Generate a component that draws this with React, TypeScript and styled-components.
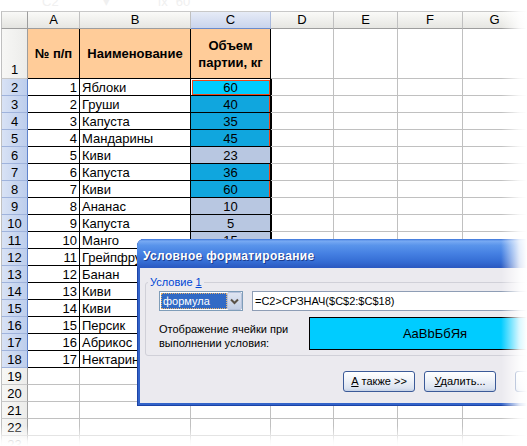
import React from 'react';
import styled, { createGlobalStyle, css } from 'styled-components';

const GlobalStyle = createGlobalStyle`
  html, body { margin: 0; padding: 0; background: #fff; }
  body { font-family: "Liberation Sans", Arial, sans-serif; overflow: hidden; }
  * { box-sizing: border-box; }
`;

const Page = styled.div`
  position: relative;
  width: 527px;
  height: 446px;
  overflow: hidden;
  background: #fff;
`;

const FormulaStrip = styled.div`
  height: 11px;
  display: flex;
  align-items: flex-start;
  overflow: hidden;
  font-size: 13px;
  line-height: 13px;
  color: #f0f0f0;
`;

const FormulaPart = styled.span<{ $left: number }>`
  margin-left: ${(p) => p.$left}px;
  margin-top: -5px;
`;

const Sheet = styled.div`
  margin-left: 1px;
  display: grid;
  grid-template-columns: 27px 52px 111px 80px 63px 64px 65px 64px;
  grid-template-rows: 18px 50px repeat(22, 17px);
`;

const Corner = styled.div`
  border-top: 1px solid #c8c8c8;
  border-left: 1px solid #c0c0c0;
  border-right: 1px solid #9d9d9d;
  border-bottom: 1px solid #9d9d9d;
  background: linear-gradient(#f9f9f7, #e4e4e0);
`;

const ColHeader = styled.div<{ $selected?: boolean }>`
  border-top: 1px solid #c8c8c8;
  border-right: 1px solid #c0c0c0;
  border-bottom: 1px solid #9d9d9d;
  background: linear-gradient(#fafaf8, #e6e6e2);
  font-size: 13px;
  line-height: 16px;
  display: flex;
  align-items: center;
  justify-content: center;
  color: #000;
  ${(p) =>
    p.$selected &&
    css`
      background: linear-gradient(#e6ebf7, #c9d4ec);
      border-bottom-color: #6b8bcb;
      border-right-color: #a9b9dc;
    `}
`;

const RowHeader = styled.div<{ $selected?: boolean; $tall?: boolean }>`
  border-left: 1px solid #c0c0c0;
  border-right: 1px solid #9d9d9d;
  border-bottom: 1px solid #c8c8c8;
  background: linear-gradient(to right, #f7f7f5, #ececea);
  font-size: 13px;
  line-height: 14px;
  display: flex;
  justify-content: center;
  align-items: ${(p) => (p.$tall ? 'flex-end' : 'flex-start')};
  padding-top: 2px;
  padding-bottom: ${(p) => (p.$tall ? '1px' : '0')};
  color: #000;
  ${(p) =>
    p.$selected &&
    css`
      background: linear-gradient(to right, #d8e2f5, #bccdec);
      border-right-color: #5f83cc;
      border-bottom-color: #9fb3dc;
    `}
`;

type Tone = 'none' | 'head' | 'active' | 'hit' | 'sel';

const toneStyles: Record<Tone, ReturnType<typeof css> | string> = {
  none: '',
  head: css`
    background: #ffcc99;
    font-weight: bold;
    text-align: center;
    line-height: 17px;
    align-items: center;
    white-space: normal;
    padding-top: 0;
  `,
  active: css`
    background: #00ccff;
    box-shadow: 1px 0 0 #000, inset 1px 1px 0 #fff, inset 2px 2px 0 #f04818,
      inset -1px -1px 0 #f04818;
  `,
  hit: css`
    background: #10a6de;
    box-shadow: 1px 0 0 #000, inset -1px 0 0 #f04818;
  `,
  sel: css`
    background: #b8c7e1;
    box-shadow: 1px 0 0 #000;
  `,
};

const Cell = styled.div<{ $boxed?: boolean; $align?: 'left' | 'right' | 'center'; $tone?: Tone }>`
  border-right: 1px solid ${(p) => (p.$boxed ? '#000' : '#c0c0c0')};
  border-bottom: 1px solid ${(p) => (p.$boxed ? '#000' : '#c0c0c0')};
  font-size: 13px;
  line-height: 14px;
  padding: 2px 2px 0;
  white-space: nowrap;
  overflow: hidden;
  display: flex;
  align-items: flex-start;
  justify-content: ${(p) =>
    p.$align === 'right' ? 'flex-end' : p.$align === 'center' ? 'center' : 'flex-start'};
  color: #000;
  ${(p) => toneStyles[p.$tone ?? 'none']}
`;

/* ---------- dialog ---------- */

const Dialog = styled.div`
  position: absolute;
  left: 137px;
  top: 239px;
  width: 541px;
  height: 167px;
  display: flex;
  flex-direction: column;
  padding: 0 3px 3px;
  border-radius: 7px 7px 0 0;
  background: #3263c9;
  box-shadow: inset 1px 0 0 #1c43a6, inset -1px 0 0 #1c43a6, inset 0 -1px 0 #1c43a6;
  font-family: "Liberation Sans", Arial, sans-serif;
  font-size: 11px;
  color: #000;
`;

const TitleBar = styled.div`
  height: 29px;
  margin: 0 -3px;
  padding: 4px 0 0 6px;
  border-radius: 7px 7px 0 0;
  background: linear-gradient(
    to bottom,
    #3a72d8 0%,
    #78aaf3 7%,
    #5994eb 22%,
    #4580e2 50%,
    #356dd4 78%,
    #2a58c0 100%
  );
  display: flex;
  align-items: center;
  color: #fff;
  font-weight: bold;
  font-size: 12px;
  letter-spacing: 0.35px;
  text-shadow: 1px 1px 0 #1b3d8f;
`;

const Body = styled.div`
  flex: 1;
  background: #ebeaef;
  padding: 7px 7px 0 5px;
  display: flex;
  flex-direction: column;
`;

const Group = styled.fieldset`
  margin: 0;
  min-width: 0;
  border: 1px solid #d0d0d8;
  border-radius: 3px;
  padding: 2px 8px 5px 2px;
`;

const GroupLegend = styled.legend`
  padding: 0 2px;
  margin-left: 0;
  color: #0046d5;
  font-size: 11px;
  line-height: 14px;
`;

const Underline = styled.span`
  text-decoration: underline;
`;

const GroupContent = styled.div`
  padding-left: 11px;
  display: flex;
  flex-direction: column;
  gap: 6px;
`;

const ConditionRow = styled.div`
  display: flex;
  gap: 9px;
  height: 20px;
`;

const Combo = styled.div`
  width: 84px;
  height: 20px;
  border: 1px solid #7f9db9;
  background: #fff;
  padding: 1px 0 1px 1px;
  display: flex;
`;

const ComboValue = styled.div`
  flex: 1;
  background: #316ac5;
  color: #fff;
  font-size: 11px;
  line-height: 14px;
  padding: 0 1px;
  display: flex;
  align-items: center;
`;

const ComboText = styled.span`
  outline: 1px dotted #e6b26a;
  outline-offset: 0;
  padding: 0 1px;
  flex: 1;
`;

const ComboButton = styled.div`
  width: 15px;
  margin-top: -1px;
  margin-bottom: -1px;
  border: 1px solid #b7c3dc;
  border-radius: 2px;
  background: linear-gradient(#dfe5f1, #c3cfe6);
  display: flex;
  align-items: center;
  justify-content: center;
`;

const FormulaInput = styled.div`
  flex: 1;
  margin-right: 18px;
  border: 1px solid #8e9db5;
  background: #fff;
  font-size: 11px;
  line-height: 16px;
  padding: 1px 2px;
  white-space: nowrap;
`;

const PreviewRow = styled.div`
  display: flex;
  align-items: flex-start;
  height: 33px;
`;

const PreviewLabel = styled.div`
  width: 150px;
  padding-top: 5px;
  font-size: 11px;
  line-height: 14px;
`;

const Preview = styled.div`
  width: 252px;
  height: 33px;
  border: 1px solid #000;
  background: #00ccff;
  display: flex;
  align-items: center;
  justify-content: center;
  font-size: 13px;
  color: #000;
`;

const ButtonRow = styled.div`
  margin-top: 15px;
  display: flex;
  justify-content: flex-end;
  gap: 9px;
`;

const Button = styled.div<{ $spaced?: boolean }>`
  width: 72px;
  height: 21px;
  border: 1px solid #3b5a98;
  border-radius: 3px;
  background: linear-gradient(#ffffff 0%, #f1f4f9 40%, #dbe3f0 85%, #c5d1e6 100%);
  font-size: 11px;
  line-height: 19px;
  text-align: center;
  color: #000;
  margin-left: ${(p) => (p.$spaced ? '10px' : '0')};
`;

const FormatButton = styled(Button)`
  margin-left: 9px;
  align-self: center;
`;

const FadeRight = styled.div`
  position: absolute;
  top: 0;
  right: 0;
  bottom: 0;
  width: 26px;
  background: linear-gradient(to right, rgba(255, 255, 255, 0), rgba(255, 255, 255, 0.85) 70%, #fff);
  pointer-events: none;
`;

const FadeBottom = styled.div`
  position: absolute;
  left: 0;
  right: 0;
  bottom: 0;
  height: 20px;
  background: linear-gradient(rgba(255, 255, 255, 0), rgba(255, 255, 255, 0.9) 75%, #fff);
  pointer-events: none;
`;

const Chevron = () => (
  <svg width="9" height="7" viewBox="0 0 9 7">
    <path d="M1 1.5 L4.5 5 L8 1.5" fill="none" stroke="#5a5248" strokeWidth="2" />
  </svg>
);

const data: [number, string, number][] = [
  [1, 'Яблоки', 60],
  [2, 'Груши', 40],
  [3, 'Капуста', 35],
  [4, 'Мандарины', 45],
  [5, 'Киви', 23],
  [6, 'Капуста', 36],
  [7, 'Киви', 60],
  [8, 'Ананас', 10],
  [9, 'Капуста', 5],
  [10, 'Манго', 15],
  [11, 'Грейпфрут', 30],
  [12, 'Банан', 20],
  [13, 'Киви', 25],
  [14, 'Киви', 28],
  [15, 'Персик', 40],
  [16, 'Абрикос', 34],
  [17, 'Нектарины', 12],
];

const avg = data.reduce((s, r) => s + r[2], 0) / data.length;
const cols = ['A', 'B', 'C', 'D', 'E', 'F', 'G'];
const emptyCols = [0, 1, 2, 3];

export default function App() {
  return (
    <Page>
      <GlobalStyle />
      <FormulaStrip>
        <FormulaPart $left={42}>C2</FormulaPart>
        <FormulaPart $left={44}>▾</FormulaPart>
        <FormulaPart $left={48}>fx</FormulaPart>
        <FormulaPart $left={8}>60</FormulaPart>
      </FormulaStrip>

      <Sheet>
        <Corner />
        {cols.map((c) => (
          <ColHeader key={c} $selected={c === 'C'}>
            {c}
          </ColHeader>
        ))}

        <RowHeader $tall>1</RowHeader>
        <Cell $boxed $tone="head" $align="center">№ п/п</Cell>
        <Cell $boxed $tone="head" $align="center">Наименование</Cell>
        <Cell $boxed $tone="head" $align="center">
          Объем
          <br />
          партии, кг
        </Cell>
        {emptyCols.map((i) => (
          <Cell key={i} />
        ))}

        {data.map(([n, name, v], idx) => (
          <React.Fragment key={n}>
            <RowHeader $selected>{n + 1}</RowHeader>
            <Cell $boxed $align="right">{n}</Cell>
            <Cell $boxed>{name}</Cell>
            <Cell $boxed $align="center" $tone={idx === 0 ? 'active' : v > avg ? 'hit' : 'sel'}>
              {v}
            </Cell>
            {emptyCols.map((i) => (
              <Cell key={i} />
            ))}
          </React.Fragment>
        ))}

        {[19, 20, 21, 22, 23].map((r) => (
          <React.Fragment key={r}>
            <RowHeader>{r}</RowHeader>
            {cols.map((c) => (
              <Cell key={c} />
            ))}
          </React.Fragment>
        ))}
      </Sheet>

      <Dialog>
        <TitleBar>Условное форматирование</TitleBar>
        <Body>
          <Group>
            <GroupLegend>
              Условие <Underline>1</Underline>
            </GroupLegend>
            <GroupContent>
              <ConditionRow>
                <Combo>
                  <ComboValue>
                    <ComboText>формула</ComboText>
                  </ComboValue>
                  <ComboButton>
                    <Chevron />
                  </ComboButton>
                </Combo>
                <FormulaInput>=C2&gt;СРЗНАЧ($C$2:$C$18)</FormulaInput>
              </ConditionRow>
              <PreviewRow>
                <PreviewLabel>
                  Отображение ячейки при
                  <br />
                  выполнении условия:
                </PreviewLabel>
                <Preview>AaBbБбЯя</Preview>
                <FormatButton>
                  <Underline>Ф</Underline>ормат...
                </FormatButton>
              </PreviewRow>
            </GroupContent>
          </Group>
          <ButtonRow>
            <Button>
              <Underline>А</Underline> также &gt;&gt;
            </Button>
            <Button>
              <Underline>У</Underline>далить...
            </Button>
            <Button $spaced>ОК</Button>
            <Button>Отмена</Button>
          </ButtonRow>
        </Body>
      </Dialog>

      <FadeRight />
      <FadeBottom />
    </Page>
  );
}
